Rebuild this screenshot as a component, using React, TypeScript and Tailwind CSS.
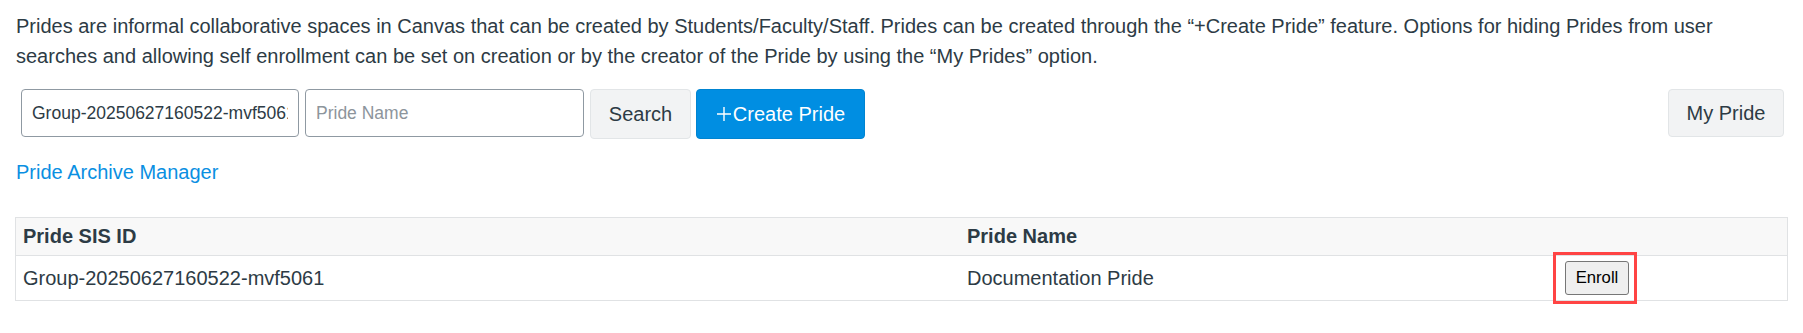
import { useState } from "react";

type Pride = { sisId: string; name: string };

const PRIDES: Pride[] = [{ sisId: "Group-20250627160522-mvf5061", name: "Documentation Pride" }];

function PlusIcon() {
  return (
    <svg viewBox="0 0 16 16" className="w-[16px] h-[16px] mr-[1px]" fill="none" stroke="currentColor" strokeWidth="1.4">
      <path d="M8 1v14M1 8h14" />
    </svg>
  );
}

export default function App() {
  const [sisId, setSisId] = useState("Group-20250627160522-mvf5061");
  const [name, setName] = useState("");

  return (
    <div className="min-h-screen bg-white px-[15px] pt-[11px] font-['Liberation_Sans',Arial,sans-serif] text-[20px] leading-[30px] text-[#2d3b45]">
      <p className="pl-[1px]">
        Prides are informal collaborative spaces in Canvas that can be created by Students/Faculty/Staff. Prides can be created through the “+Create Pride” feature. Options for hiding Prides from user searches and allowing self enrollment can be set on creation or by the creator of the Pride by using the “My Prides” option.
      </p>

      <div className="mt-[18px] flex items-start">
        <div className="ml-[6px] flex items-start gap-[6px]">
          <input
            value={sisId}
            onChange={(e) => setSisId(e.target.value)}
            className="h-[48px] w-[278px] rounded-[4px] border border-[#8f99a2] bg-white px-[10px] text-[17.5px] text-[#2d3b45] outline-none"
          />
          <input
            value={name}
            onChange={(e) => setName(e.target.value)}
            placeholder="Pride Name"
            className="h-[48px] w-[279px] rounded-[4px] border border-[#8f99a2] bg-white px-[10px] text-[17.5px] text-[#2d3b45] outline-none placeholder:text-[#8d959c]"
          />
          <button className="h-[50px] w-[101px] rounded-[4px] border border-[#e2e5e7] bg-[#f2f3f4] text-[20px] text-[#2d3b45]">
            Search
          </button>
          <button className="-ml-[1px] flex h-[50px] w-[169px] items-center justify-center rounded-[4px] border border-[#0084d1] bg-[#008ee2] text-[20px] text-white">
            <PlusIcon />
            Create Pride
          </button>
        </div>
        <button className="ml-auto mr-[4px] h-[48px] w-[116px] rounded-[4px] border border-[#e2e5e7] bg-[#f2f3f4] text-[20px] text-[#2d3b45]">
          My Pride
        </button>
      </div>

      <a href="#" className="mt-[18px] block w-fit pl-[1px] text-[#0a8fe2]">
        Pride Archive Manager
      </a>

      <div className="mt-[30px] border border-[#e0e2e4]">
        <div className="grid grid-cols-[944px_597px_1fr] bg-[#f8f8f8] border-b border-[#e0e2e4] font-bold">
          <div className="px-[7px] pt-[3px] pb-[4px]">Pride SIS ID</div>
          <div className="px-[7px] pt-[3px] pb-[4px]">Pride Name</div>
          <div />
        </div>
        {PRIDES.map((p) => (
          <div key={p.sisId} className="grid h-[44px] grid-cols-[944px_597px_1fr] items-center">
            <div className="px-[7px]">{p.sisId}</div>
            <div className="px-[7px]">{p.name}</div>
            <div className="px-[8px]">
              <span className="relative inline-block">
                <button className="flex h-[34px] w-[64px] items-center justify-center rounded-[3px] border border-[#767676] bg-[#efefef] text-[16.7px] leading-none text-black">
                  Enroll
                </button>
                <span className="pointer-events-none absolute -left-[12px] -right-[8px] -top-[9px] -bottom-[9px] border-[3px] border-[#ff4444]" />
              </span>
            </div>
          </div>
        ))}
      </div>
    </div>
  );
}
